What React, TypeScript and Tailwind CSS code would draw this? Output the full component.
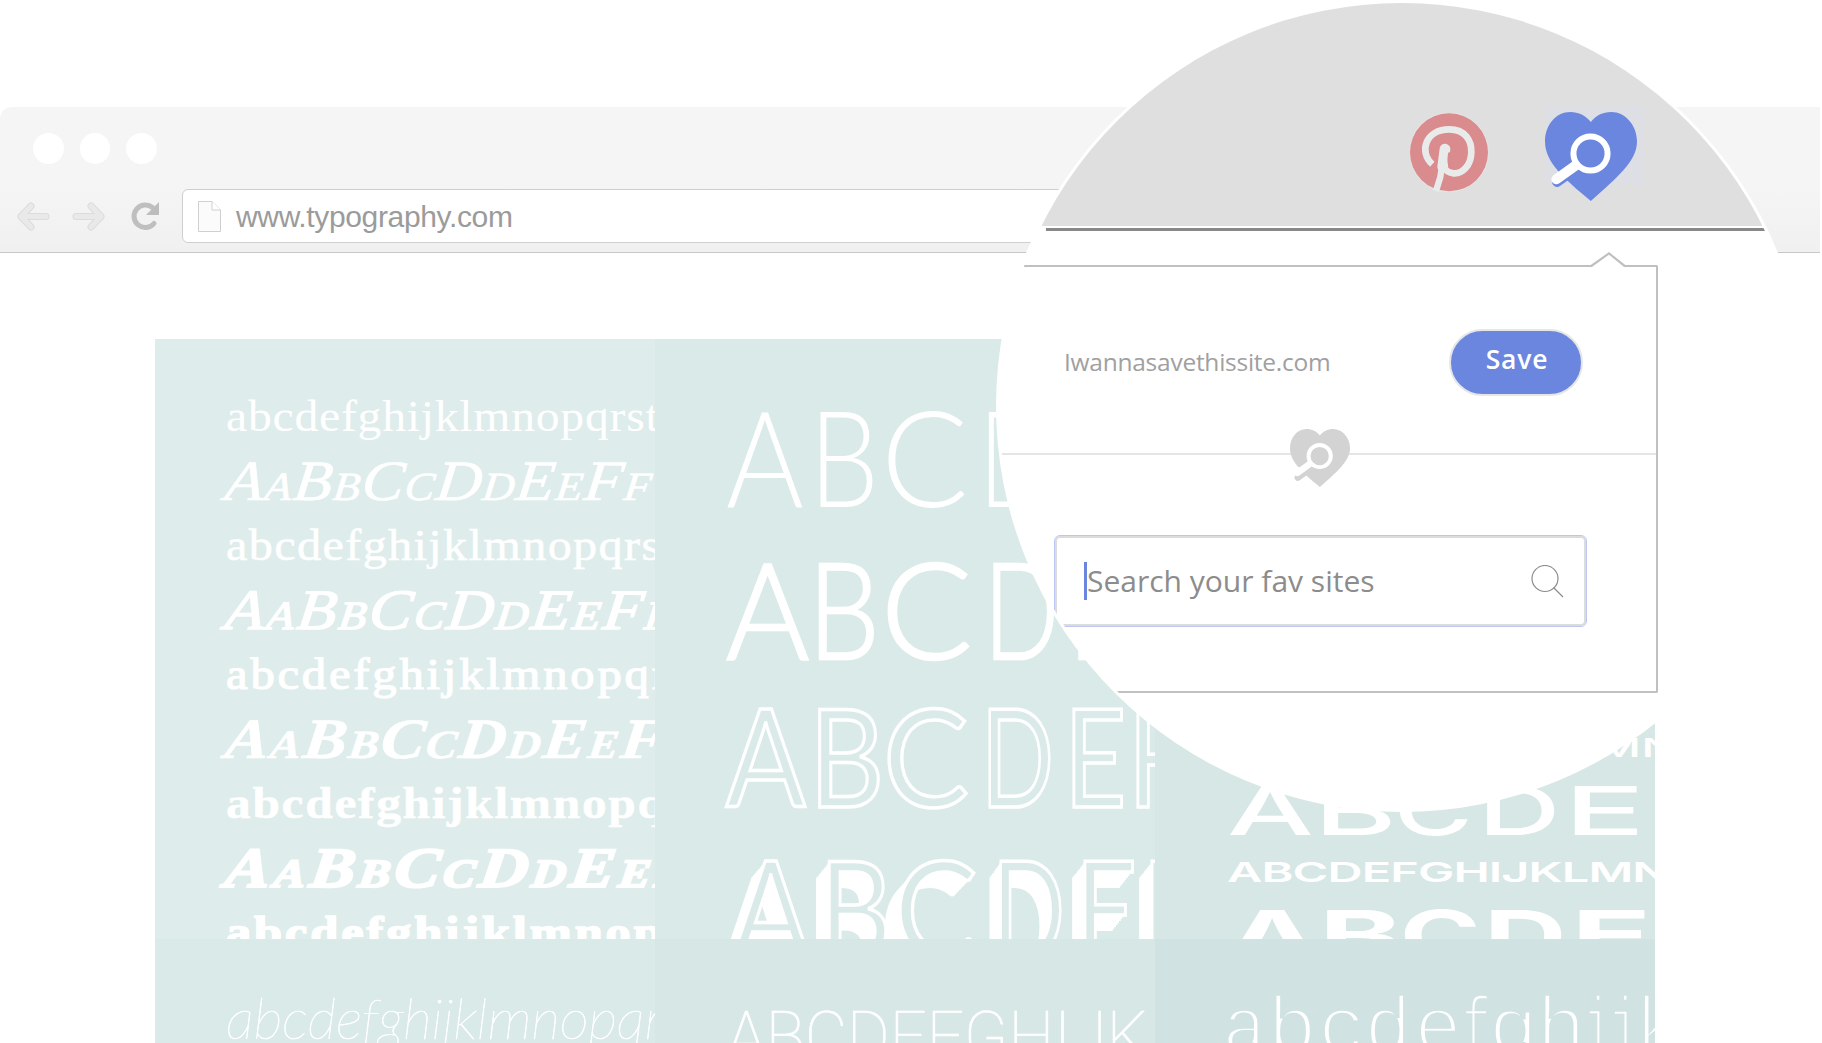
import React from "react";

type Glyph = [char: string, advance: number, stretch: number];

/* A row of display letters, each with its own advance and horizontal stretch. */
function Letters({ glyphs, className }: { glyphs: Glyph[]; className: string }) {
  return (
    <div className={`flex whitespace-nowrap ${className}`}>
      {glyphs.map(([char, advance, stretch], i) => (
        <span
          key={i}
          className="block shrink-0 origin-left"
          style={{ width: advance, transform: `scaleX(${stretch})` }}
        >
          {char}
        </span>
      ))}
    </div>
  );
}

function HeartSearch({
  className,
  fill,
  shadow,
}: {
  className: string;
  fill: string;
  shadow: number;
}) {
  return (
    <svg viewBox="0 0 275 266" preserveAspectRatio="none" className={className} aria-hidden="true">
      <path
        d="M137 30C122 10 100 0 76 0C32 0 0 40 0 88C0 150 56 198 137 266C216 196 275 146 275 88C275 40 240 0 198 0C172 0 152 10 137 30Z"
        fill={fill}
      />
      <path d="M20 196L20 206L45 212L60 200L40 172Z" fill={shadow > 10 ? "#fff" : "none"} />
      <path
        d={`M36 ${201 + shadow}L92 ${161 + shadow}`}
        stroke={fill}
        strokeWidth="30"
        strokeLinecap="round"
      />
      <path d="M34 201L94 158" stroke="#fff" strokeWidth="30" strokeLinecap="round" />
      <circle cx="136" cy="124" r="51" fill={fill} stroke="#fff" strokeWidth="18" />
    </svg>
  );
}

function Pinterest() {
  return (
    <svg viewBox="0 0 240 240" className="h-20 w-20" aria-hidden="true">
      <circle cx="120" cy="118" r="120" fill="#e2e5e4" />
      <circle cx="120" cy="118" r="117" fill="#d98b8d" />
      <path
        d="M70 154C28 116 50 49 121 49C170 49 188 84 187 118C186 158 160 183 134 181C118 179 108 170 105 160"
        fill="none"
        stroke="#e9ebeb"
        strokeWidth="20"
      />
      <path d="M107 108L94 192L81 234" fill="none" stroke="#e9ebeb" strokeWidth="19" />
      <path d="M108 108L101 162" stroke="#e9ebeb" strokeWidth="32" strokeLinecap="round" />
      <path d="M121 122C118 140 118 152 124 162" fill="none" stroke="#d98b8d" strokeWidth="8" strokeLinecap="round" />
    </svg>
  );
}

function BrowserChrome() {
  return (
    <header className="mt-[107px] mr-0.5 flex h-[146px] flex-col rounded-tl-xl border-b border-[#c8c8c8] bg-linear-to-b from-[#f5f5f5] from-55% to-[#f0f0f0]">
      <div className="flex h-[82px] items-center gap-4 pl-[33px]">
        <span className="h-[31px] w-[30.500px] rounded-full bg-white" />
        <span className="h-[31px] w-[30.500px] rounded-full bg-white" />
        <span className="h-[31px] w-[30.500px] rounded-full bg-white" />
      </div>
      <div className="flex items-center">
        <svg viewBox="0 0 182 54" className="h-[54px] w-[182px] shrink-0" fill="none" strokeLinecap="round" strokeLinejoin="round">
          <path d="M46 27.500H21M31 17L21 27.500L31 38" stroke="#dcdcdc" strokeWidth="7" />
          <path d="M46 27.500H21M31 17L21 27.500L31 38" stroke="#e9e9e9" strokeWidth="5" />
          <path d="M76 27.500H101M91 17L101 27.500L91 38" stroke="#dcdcdc" strokeWidth="7" />
          <path d="M76 27.500H101M91 17L101 27.500L91 38" stroke="#e9e9e9" strokeWidth="5" />
          <path d="M154 34.500A11.300 11.300 0 1 1 152.500 18.500" stroke="#bfbfbf" strokeWidth="5" />
          <path d="M159 13V26H146Z" fill="#bdbdbd" />
        </svg>
        <div className="flex h-[54px] w-[900px] items-center rounded-md border border-[#cfcfcf] bg-white pl-[15px]">
          <svg viewBox="0 0 23 31" className="h-[31px] w-[23px] shrink-0" fill="#fbfbfb" stroke="#d0d0d0">
            <path d="M.5 .5H14L22.500 9V30.500H.5Z" />
            <path d="M14 .5V9H22.500" fill="#fff" />
          </svg>
          <span className="ml-[15px] font-['Liberation_Sans',sans-serif] text-[30px] tracking-[-0.35px] text-[#9b9b9b]">
            www.typography.com
          </span>
        </div>
      </div>
    </header>
  );
}

const lower = "abcdefghijklmnopqrstuvwxyz";
const pairs = "AaBbCcDdEeFfGg";

function TypeGrid() {
  return (
    <main className="mt-[86px] ml-[155px] grid h-[704px] w-[1500px] grid-cols-3 grid-rows-[600px_104px] overflow-hidden text-white">
      <section className="overflow-hidden bg-[#deedeb] pt-[47px] pl-[71px] font-['Liberation_Serif',serif] whitespace-nowrap">
        <p className="h-[60px] origin-left scale-x-[1.060] text-[45px] leading-[60px] tracking-[0.7px]">{lower}</p>
        <p className="h-[69px] origin-left -skew-x-6 scale-x-[1.110] text-[57px] leading-[70px] tracking-[1.100px] italic [font-variant:small-caps] [-webkit-text-stroke:0.600px_white]">{pairs}</p>
        <p className="h-[60px] origin-left scale-x-[1.070] text-[45px] leading-[60px] tracking-[1.300px] [-webkit-text-stroke:0.500px_white]">{lower}</p>
        <p className="h-[69px] origin-left -skew-x-6 scale-x-[1.130] text-[57px] leading-[70px] tracking-[2.200px] italic [font-variant:small-caps] [-webkit-text-stroke:1.400px_white]">{pairs}</p>
        <p className="h-[60px] origin-left scale-x-[1.080] text-[45px] leading-[60px] tracking-[2.600px] [-webkit-text-stroke:1.200px_white]">{lower}</p>
        <p className="h-[69px] origin-left -skew-x-6 scale-x-[1.150] text-[57px] leading-[70px] font-bold tracking-[1.500px] italic [font-variant:small-caps] [-webkit-text-stroke:0.600px_white]">{pairs}</p>
        <p className="h-[60px] origin-left scale-x-[1.100] text-[45px] leading-[60px] font-bold tracking-[1.500px] [-webkit-text-stroke:0.500px_white]">{lower}</p>
        <p className="h-[69px] origin-left -skew-x-6 scale-x-[1.190] text-[57px] leading-[70px] font-bold tracking-[3.200px] italic [font-variant:small-caps] [-webkit-text-stroke:2px_white]">{pairs}</p>
        <p className="h-[60px] origin-left scale-x-[1.120] text-[45px] leading-[60px] font-bold tracking-[2.600px] [-webkit-text-stroke:1.600px_white]">{lower}</p>
      </section>

      <section className="overflow-hidden bg-[#d9eae8] pt-[41px] pl-[71px] font-[Lato,sans-serif] text-[135px] leading-[150px]">
        <Letters
          className="font-light"
          glyphs={[["A", 83, 0.88], ["B", 72, 0.82], ["C", 98, 0.96], ["D", 84, 0.7], ["E", 64, 0.8]]}
        />
        <Letters
          className="relative top-0.5 font-light [-webkit-text-stroke:2.500px_white]"
          glyphs={[["A", 82, 0.94], ["B", 73, 0.84], ["C", 103, 1], ["D", 84, 0.73], ["E", 64, 0.8]]}
        />
        <Letters
          className="text-transparent [-webkit-text-stroke:3.500px_white]"
          glyphs={[["A", 83, 0.87], ["B", 74, 0.86], ["C", 98, 0.95], ["D", 83, 0.71], ["E", 64, 0.8], ["F", 64, 0.8]]}
        />
        <Letters
          className="relative top-0.5 pl-1.5 text-[#d9eae8] [-webkit-text-stroke:3.500px_white] [text-shadow:-2px_2px_white,-4px_4px_white,-6px_6px_white,-8px_8px_white,-10px_10px_white,-12px_12px_white,-14px_14px_white,-16px_16px_white]"
          glyphs={[["A", 87, 0.85], ["B", 75, 0.83], ["C", 98, 0.93], ["D", 83, 0.71], ["E", 67, 0.8], ["F", 64, 0.8]]}
        />
      </section>

      <section className="flex flex-col overflow-hidden bg-[#d6e7e5] pl-[72px] font-[Inter,sans-serif]">
        <div className="mt-[384px] h-[44px] w-[600px]">
          <p className="origin-left scale-x-[1.870] text-[26px] leading-[50px] font-medium">ABCDEFGHIJKLMN</p>
        </div>
        <Letters
          className="h-[87px] text-[68px] leading-[87px] font-medium"
          glyphs={[["A", 87, 1.8], ["B", 80, 1.85], ["C", 84, 1.58], ["D", 86, 1.68], ["E", 80, 1.98]]}
        />
        <div className="h-[36px] w-[600px]">
          <p className="origin-left scale-x-[1.800] text-[27px] leading-[37px] font-semibold tracking-[-0.500px]">ABCDEFGHIJKLMN</p>
        </div>
        <Letters
          className="h-[88px] text-[68px] leading-[88px] font-bold"
          glyphs={[["A", 92, 1.8], ["B", 81, 1.85], ["C", 84, 1.6], ["D", 87, 1.68], ["E", 80, 1.95]]}
        />
      </section>

      <section className="overflow-hidden bg-[#daeae8] pt-[43px] pl-[71px] font-[Lato,sans-serif] whitespace-nowrap">
        <p className="text-[57px] leading-[70px] font-thin tracking-[-0.300px] italic [-webkit-text-stroke:0.600px_white]">{lower}</p>
      </section>

      <section className="overflow-hidden bg-[#d6e7e5] pt-[57px] pl-[72px] font-[Roboto,sans-serif] whitespace-nowrap">
        <p className="origin-left scale-x-[0.970] text-[67px] leading-[80px] font-thin [-webkit-text-stroke:0.700px_white]">ABCDEFGHIJK</p>
      </section>

      <section className="overflow-hidden bg-[#d0e3e2] pt-[47px] pl-[67px] font-['Liberation_Mono',monospace] whitespace-nowrap">
        <Letters
          className="text-[80px] leading-[90px] [-webkit-text-stroke:3.500px_#d0e3e2]"
          glyphs={[["a", 45, 0.95], ["b", 51, 1.05], ["c", 46, 1], ["d", 50, 1], ["e", 48, 1], ["f", 26, 0.6], ["g", 48, 1.05], ["h", 47, 1.05], ["i", 25, 0.6], ["j", 26, 0.6], ["k", 48, 1]]}
        />
      </section>
    </main>
  );
}

function Popup() {
  return (
    <div className="relative mt-[34px] h-[428px] w-[659px] rounded-r-xs border-y-2 border-r-2 border-[#c0c0c0] bg-white font-['Open_Sans','Noto_Sans',sans-serif]">
      <svg viewBox="0 0 36 16" className="absolute -top-[15px] left-[592px] h-4 w-9" fill="#fff" stroke="#c0c0c0" strokeWidth="2">
        <path d="M0 14L18 1.500L34 14" />
        <path d="M1 15.500L18 3L33 15.500" stroke="#fff" />
        <path d="M0 14.500L18 1.500L34 14.500" />
      </svg>
      <div className="flex h-[186px] items-center justify-between pt-1 pr-[73px] pl-[65px]">
        <span className="text-[24.500px] tracking-[-0.250px] text-[#a0a0a0]">Iwannasavethissite.com</span>
        <button className="h-[67px] w-[134px] rounded-full border-2 border-[#e6e6e6] bg-[#6a86df] pb-1 pl-0.5 text-[26.500px] font-semibold tracking-[0.8px] text-white">
          Save
        </button>
      </div>
      <div className="relative h-0.5 bg-[#e5e5e5]">
        <HeartSearch className="absolute -top-6 left-[291px] h-[58px] w-[60px]" fill="#d3d3d3" shadow={22} />
      </div>
      <div className="mt-20 ml-[55px] flex h-[92px] w-[533px] items-center justify-between rounded-md border border-[#bcc6f2] pr-[22px] pl-[29px] shadow-[inset_0_0_0_2px_#dcdcdc]">
        <div className="flex items-center">
          <span className="h-[38px] w-[3px] bg-[#6a86df]" />
          <span className="pb-0.5 text-[30px] text-[#8c8c8c]">Search your fav sites</span>
        </div>
        <svg viewBox="0 0 33 33" className="h-[33px] w-[33px]" fill="none" stroke="#8c8c8c" strokeWidth="1.200">
          <circle cx="14" cy="13.500" r="13" />
          <path d="M22.500 22.500L32 32" />
        </svg>
      </div>
    </div>
  );
}

function Magnifier() {
  return (
    <aside className="absolute top-0 left-[996px] h-[812px] w-[812px] rounded-full bg-white p-[3px]">
      <div className="h-full w-full overflow-hidden rounded-full">
        <div className="flex h-[223px] items-center bg-[#dfdfdf] pt-[77px] pl-[410px]">
          <Pinterest />
          <div className="-mt-[14px] ml-14 h-20 w-[99px] bg-[#dddfe5] pt-[6px]">
            <HeartSearch className="h-[89px] w-[92px]" fill="#6a86df" shadow={8} />
          </div>
        </div>
        <div className="h-0.5 bg-white" />
        <div className="ml-[47px] h-[3px] bg-[#888]" />
        <Popup />
      </div>
    </aside>
  );
}

export default function App() {
  return (
    <div className="relative flex h-[1043px] w-[1822px] flex-col overflow-hidden bg-white">
      <BrowserChrome />
      <TypeGrid />
      <Magnifier />
    </div>
  );
}
